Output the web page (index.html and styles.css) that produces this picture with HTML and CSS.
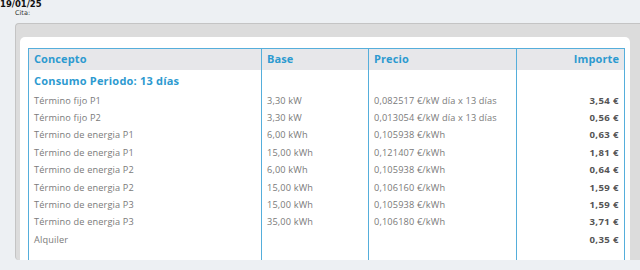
FILE: index.html
```html
<!DOCTYPE html>
<html lang="es">
<head>
<meta charset="utf-8">
<link rel="stylesheet" href="styles.css">
</head>
<body>
<div class="date">19/01/25</div>
<div class="cita">Cita:</div>
<div class="panel">
  <div class="card">
    <table class="invoice">
      <colgroup>
        <col class="c1"><col class="c2"><col class="c3"><col class="c4">
      </colgroup>
      <thead>
        <tr><th>Concepto</th><th>Base</th><th>Precio</th><th class="num">Importe</th></tr>
      </thead>
      <tbody>
        <tr class="section"><td>Consumo Periodo: 13 días</td><td></td><td></td><td></td></tr>
        <tr><td>Término fijo P1</td><td>3,30 kW</td><td>0,082517 €/kW día x 13 días</td><td class="num">3,54 €</td></tr>
        <tr><td>Término fijo P2</td><td>3,30 kW</td><td>0,013054 €/kW día x 13 días</td><td class="num">0,56 €</td></tr>
        <tr><td>Término de energia P1</td><td>6,00 kWh</td><td>0,105938 €/kWh</td><td class="num">0,63 €</td></tr>
        <tr><td>Término de energia P1</td><td>15,00 kWh</td><td>0,121407 €/kWh</td><td class="num">1,81 €</td></tr>
        <tr><td>Término de energia P2</td><td>6,00 kWh</td><td>0,105938 €/kWh</td><td class="num">0,64 €</td></tr>
        <tr><td>Término de energia P2</td><td>15,00 kWh</td><td>0,106160 €/kWh</td><td class="num">1,59 €</td></tr>
        <tr><td>Término de energia P3</td><td>15,00 kWh</td><td>0,105938 €/kWh</td><td class="num">1,59 €</td></tr>
        <tr><td>Término de energia P3</td><td>35,00 kWh</td><td>0,106180 €/kWh</td><td class="num">3,71 €</td></tr>
        <tr><td>Alquiler</td><td></td><td></td><td class="num">0,35 €</td></tr>
        <tr><td>&nbsp;</td><td></td><td></td><td></td></tr>
      </tbody>
    </table>
  </div>
</div>
</body>
</html>
```
FILE: styles.css
```css
html, body {
  margin: 0;
  padding: 0;
  background: #edf0f3;
  overflow: hidden;
}
body {
  width: 640px;
  height: 270px;
}
.date {
  font-family: "DejaVu Sans", sans-serif;
  font-weight: bold;
  font-size: 8.5px;
  line-height: 8px;
  height: 8px;
  color: #111;
}
.cita {
  font-family: "DejaVu Sans", sans-serif;
  font-size: 6.5px;
  line-height: 10px;
  color: #333;
  margin-left: 15px;
  height: 15px;
}
.panel {
  margin-left: 15px;
  width: 640px;
  height: 237px;
  background: #dcdcdc;
  border-top: 1px solid #c4c4c4;
  border-left: 1px solid #c4c4c4;
  border-radius: 4px 0 0 4px;
  padding: 13px 0 0 4px;
  box-sizing: border-box;
  overflow: hidden;
}
.card {
  width: 610px;
  height: 230px;
  background: #fff;
  border-radius: 5px 5px 0 0;
  padding: 11px 0 0 8px;
  box-sizing: border-box;
  overflow: hidden;
}
.invoice {
  border-collapse: collapse;
  width: 596px;
  table-layout: fixed;
  font-family: "Open Sans", sans-serif;
}
.c1 { width: 233px; }
.c2 { width: 107px; }
.c3 { width: 148px; }
.c4 { width: 108px; }
.invoice th, .invoice td {
  border-left: 1px solid #55aedb;
  border-right: 1px solid #55aedb;
  padding: 0 5px;
  text-align: left;
  white-space: nowrap;
  overflow: hidden;
}
.invoice thead tr {
  border-top: 1px solid #55aedb;
  background: #e7e7ea;
}
.invoice th {
  height: 19px;
  font-size: 11px;
  line-height: 14px;
  font-weight: 700;
  color: #2d9ad0;
  letter-spacing: 0.1px;
  padding-bottom: 2px;
}
.invoice .section td {
  height: 22px;
  font-size: 11px;
  font-weight: 700;
  color: #2d9ad0;
  letter-spacing: 0.2px;
  vertical-align: middle;
}
.invoice td {
  height: 17.4px;
  font-size: 9.2px;
  letter-spacing: 0.15px;
  color: #7a7a7a;
  line-height: 12px;
}
.invoice .num {
  text-align: right;
}
.invoice td.num {
  font-weight: 700;
  font-size: 9.6px;
  color: #555;
  letter-spacing: 0.4px;
}
```
